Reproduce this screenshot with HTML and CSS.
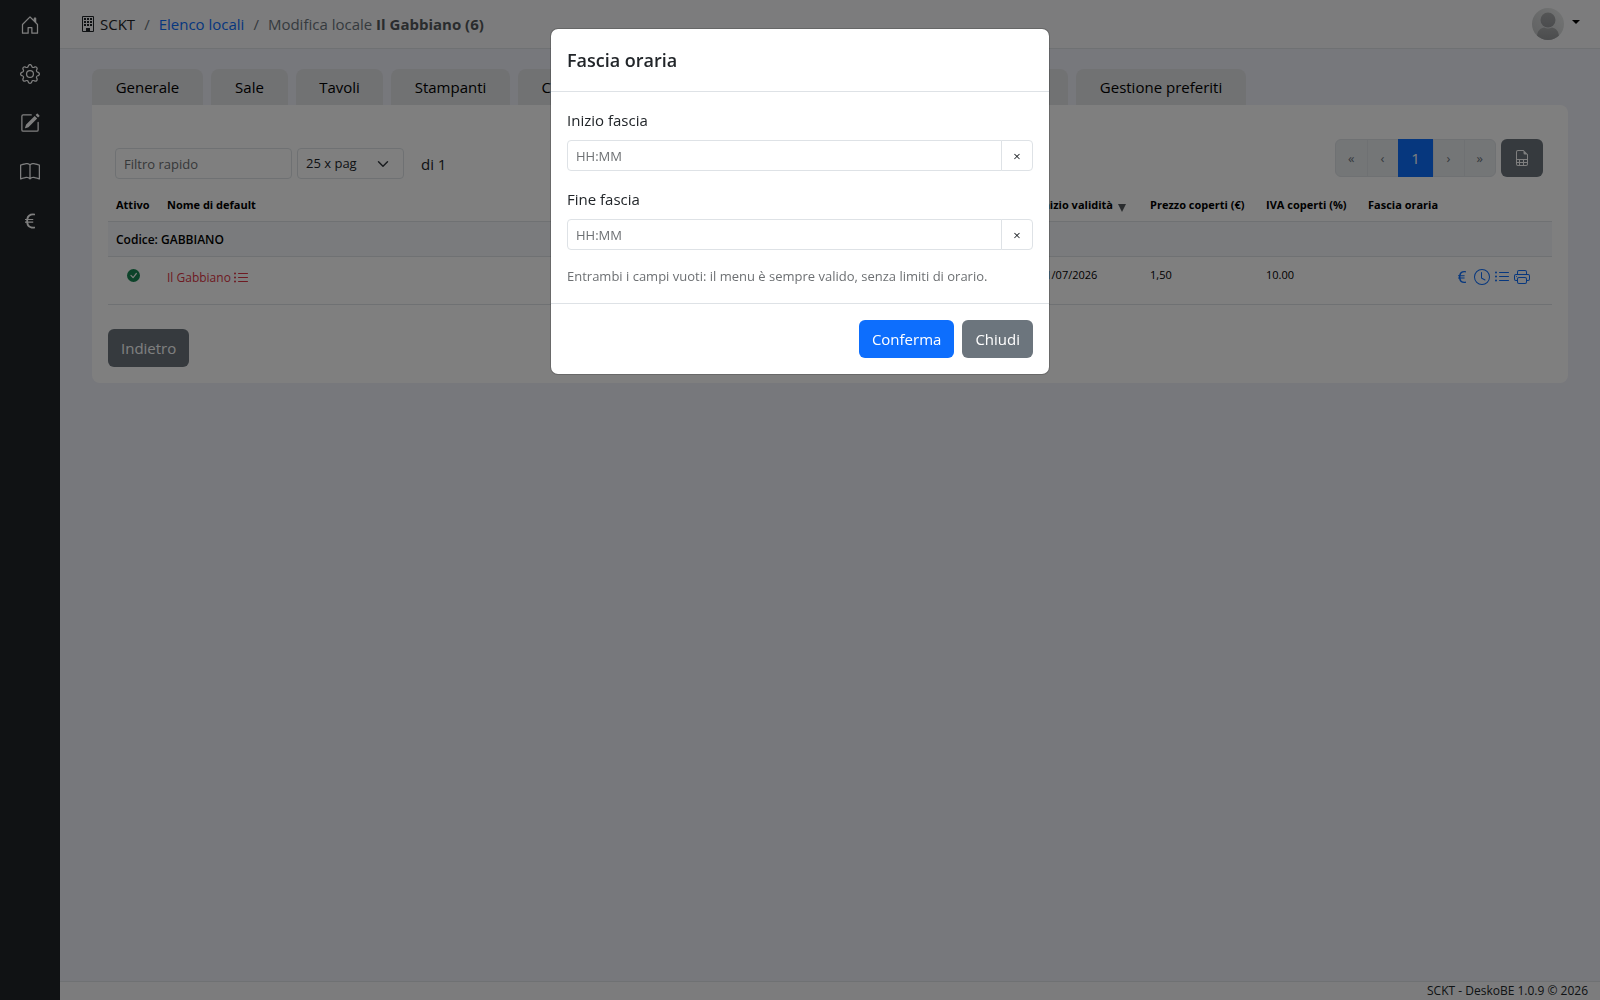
FILE: index.html
```html
<!DOCTYPE html>
<html lang="it">
<head>
    <meta charset="UTF-8">
    <meta name="viewport" content="width=device-width, initial-scale=1.0">
    <title>SCKT - Modifica locale</title>
    <link rel="stylesheet" href="styles.css">
</head>
<body>
    <!-- icone riutilizzate -->
    <svg class="sprite" aria-hidden="true">
        <symbol id="i-euro" viewBox="0 0 16 16"><path d="M4 9.42h1.063C5.4 12.323 7.317 14 10.34 14c.622 0 1.167-.068 1.659-.185v-1.3c-.484.119-1.045.17-1.659.17-2.1 0-3.455-1.198-3.775-3.264h4.017v-.928H6.497v-.936q-.002-.165.008-.329h4.078v-.927H6.618c.388-1.898 1.719-2.985 3.723-2.985.614 0 1.175.05 1.659.177V2.194A6.6 6.6 0 0 0 10.341 2c-2.928 0-4.82 1.569-5.244 4.3H4v.928h1.01v1.265H4v.928z"/></symbol>
        <symbol id="i-list" viewBox="0 0 16 16"><path fill-rule="evenodd" d="M5 11.5a.5.5 0 0 1 .5-.5h9a.5.5 0 0 1 0 1h-9a.5.5 0 0 1-.5-.5m0-4a.5.5 0 0 1 .5-.5h9a.5.5 0 0 1 0 1h-9a.5.5 0 0 1-.5-.5m0-4a.5.5 0 0 1 .5-.5h9a.5.5 0 0 1 0 1h-9a.5.5 0 0 1-.5-.5m-3 1a1 1 0 1 0 0-2 1 1 0 0 0 0 2m0 4a1 1 0 1 0 0-2 1 1 0 0 0 0 2m0 4a1 1 0 1 0 0-2 1 1 0 0 0 0 2"/></symbol>
    </svg>

    <div class="wrapper">
        <nav class="sidebar" aria-label="Menu principale">
            <a href="#" aria-label="Home"><svg viewBox="0 0 16 16"><path d="M8.354 1.146a.5.5 0 0 0-.708 0l-6 6A.5.5 0 0 0 1.5 7.5v7a.5.5 0 0 0 .5.5h4.5a.5.5 0 0 0 .5-.5v-4h2v4a.5.5 0 0 0 .5.5H14a.5.5 0 0 0 .5-.5v-7a.5.5 0 0 0-.146-.354L13 5.793V2.5a.5.5 0 0 0-.5-.5h-1a.5.5 0 0 0-.5.5v1.293zM2.5 14V7.707l5.5-5.5 5.5 5.5V14H10v-4a.5.5 0 0 0-.5-.5h-3a.5.5 0 0 0-.5.5v4z"/></svg></a>
            <a href="#" aria-label="Impostazioni"><svg viewBox="0 0 16 16"><path d="M8 4.754a3.246 3.246 0 1 0 0 6.492 3.246 3.246 0 0 0 0-6.492M5.754 8a2.246 2.246 0 1 1 4.492 0 2.246 2.246 0 0 1-4.492 0"/><path d="M9.796 1.343c-.527-1.79-3.065-1.79-3.592 0l-.094.319a.873.873 0 0 1-1.255.52l-.292-.16c-1.64-.892-3.433.902-2.54 2.541l.159.292a.873.873 0 0 1-.52 1.255l-.319.094c-1.79.527-1.79 3.065 0 3.592l.319.094a.873.873 0 0 1 .52 1.255l-.16.292c-.892 1.64.901 3.434 2.541 2.54l.292-.159a.873.873 0 0 1 1.255.52l.094.319c.527 1.79 3.065 1.79 3.592 0l.094-.319a.873.873 0 0 1 1.255-.52l.292.16c1.64.893 3.434-.902 2.54-2.541l-.159-.292a.873.873 0 0 1 .52-1.255l.319-.094c1.79-.527 1.79-3.065 0-3.592l-.319-.094a.873.873 0 0 1-.52-1.255l.16-.292c.893-1.64-.902-3.433-2.541-2.54l-.292.159a.873.873 0 0 1-1.255-.52zm-2.633.283c.246-.835 1.428-.835 1.674 0l.094.319a1.873 1.873 0 0 0 2.693 1.115l.291-.16c.764-.415 1.6.42 1.184 1.185l-.159.292a1.873 1.873 0 0 0 1.116 2.692l.318.094c.835.246.835 1.428 0 1.674l-.319.094a1.873 1.873 0 0 0-1.115 2.693l.16.291c.415.764-.42 1.6-1.185 1.184l-.291-.159a1.873 1.873 0 0 0-2.693 1.116l-.094.318c-.246.835-1.428.835-1.674 0l-.094-.319a1.873 1.873 0 0 0-2.692-1.115l-.292.16c-.764.415-1.6-.42-1.184-1.185l.159-.291A1.873 1.873 0 0 0 1.945 8.93l-.319-.094c-.835-.246-.835-1.428 0-1.674l.319-.094A1.873 1.873 0 0 0 3.06 4.377l-.16-.292c-.415-.764.42-1.6 1.185-1.184l.292.159a1.873 1.873 0 0 0 2.692-1.115z"/></svg></a>
            <a href="#" aria-label="Modifica"><svg viewBox="0 0 16 16"><path d="M15.502 1.94a.5.5 0 0 1 0 .706L14.459 3.69l-2-2L13.502.646a.5.5 0 0 1 .707 0l1.293 1.293zm-1.75 2.456-2-2L4.939 9.21a.5.5 0 0 0-.121.196l-.805 2.414a.25.25 0 0 0 .316.316l2.414-.805a.5.5 0 0 0 .196-.12z"/><path fill-rule="evenodd" d="M1 13.5A1.5 1.5 0 0 0 2.5 15h11a1.5 1.5 0 0 0 1.5-1.5v-6a.5.5 0 0 0-1 0v6a.5.5 0 0 1-.5.5h-11a.5.5 0 0 1-.5-.5v-11a.5.5 0 0 1 .5-.5H9a.5.5 0 0 0 0-1H2.5A1.5 1.5 0 0 0 1 2.5z"/></svg></a>
            <a href="#" aria-label="Menu"><svg viewBox="0 0 16 16"><path d="M1 2.828c.885-.37 2.154-.769 3.388-.893 1.33-.134 2.458.063 3.112.752v9.746c-.935-.53-2.12-.603-3.213-.493-1.18.12-2.37.461-3.287.811zm7.5-.141c.654-.689 1.782-.886 3.112-.752 1.234.124 2.503.523 3.388.893v9.923c-.918-.35-2.107-.692-3.287-.81-1.094-.111-2.278-.039-3.213.492zM8 1.783C7.015.936 5.587.81 4.287.94c-1.514.153-3.042.672-3.994 1.105A.5.5 0 0 0 0 2.5v11a.5.5 0 0 0 .707.455c.882-.4 2.303-.881 3.68-1.02 1.409-.142 2.59.087 3.223.877a.5.5 0 0 0 .78 0c.633-.79 1.814-1.019 3.222-.877 1.378.139 2.8.62 3.681 1.02A.5.5 0 0 0 16 13.5v-11a.5.5 0 0 0-.293-.455c-.952-.433-2.48-.952-3.994-1.105C10.413.809 8.985.936 8 1.783"/></svg></a>
            <a href="#" aria-label="Prezzi"><svg><use href="#i-euro"/></svg></a>
        </nav>

        <div class="page">
            <header class="topbar">
                <nav class="breadcrumb" aria-label="Percorso">
                    <span class="brand">
                        <svg class="icon" viewBox="0 0 16 16"><path fill-rule="evenodd" d="M3 0h10a1 1 0 0 1 1 1v14a1 1 0 0 1-1 1H3a1 1 0 0 1-1-1V1a1 1 0 0 1 1-1m0 1v14h10V1z"/><path d="M4 2h2v2H4zm3 0h2v2H7zm3 0h2v2h-2zM4 5h2v2H4zm3 0h2v2H7zm3 0h2v2h-2zM4 8h2v2H4zm3 0h2v2H7zm3 0h2v2h-2zM6 12h4v4H6z"/></svg>
                        SCKT
                    </span>
                    <span class="sep">/</span>
                    <a href="#">Elenco locali</a>
                    <span class="sep">/</span>
                    <span class="current">Modifica locale <strong>Il Gabbiano (6)</strong></span>
                </nav>
                <button type="button" class="user" aria-label="Utente">
                    <svg class="avatar" viewBox="0 0 32 32">
                        <defs>
                            <linearGradient id="g-bg" x1="0" y1="1" x2="1" y2="0"><stop offset="0" stop-color="#bfc1c3"/><stop offset="1" stop-color="#e8eaea"/></linearGradient>
                            <linearGradient id="g-man" x1="0" y1="0" x2="0" y2="1"><stop offset="0" stop-color="#a9abac"/><stop offset="1" stop-color="#96989b"/></linearGradient>
                            <clipPath id="c-av"><circle cx="16" cy="16" r="16"/></clipPath>
                        </defs>
                        <g clip-path="url(#c-av)">
                            <rect width="32" height="32" fill="url(#g-bg)"/>
                            <circle cx="16" cy="12" r="7.5" fill="url(#g-man)"/>
                            <path d="M5 29c0-6 3-8.5 7-9.5 2.5 1.3 5.5 1.3 8 0 4 1 7 3.5 7 9.5v3H5z" fill="url(#g-man)"/>
                        </g>
                    </svg>
                    <span class="caret"></span>
                </button>
            </header>

            <main class="content">
                <div class="tabs">
                    <a href="#" class="w-1">Generale</a>
                    <a href="#" class="w-2">Sale</a>
                    <a href="#" class="w-3">Tavoli</a>
                    <a href="#" class="w-4">Stampanti</a>
                    <a href="#" class="w-5">Cucine</a>
                    <a href="#" class="w-6">Configurazione</a>
                    <a href="#" class="w-6">Gestione menu</a>
                    <a href="#" class="w-7">Gestione preferiti</a>
                </div>

                <section class="card">
                    <div class="toolbar">
                        <div class="filters">
                            <input type="text" class="input-sm filter" placeholder="Filtro rapido" aria-label="Filtro rapido">
                            <select class="input-sm per-page" aria-label="Righe per pagina">
                                <option>25 x pag</option>
                                <option>50 x pag</option>
                            </select>
                            <span class="pages">di 1</span>
                        </div>
                        <div class="actions">
                            <div class="pagination">
                                <button type="button" disabled>«</button>
                                <button type="button" disabled>‹</button>
                                <button type="button" class="active">1</button>
                                <button type="button" disabled>›</button>
                                <button type="button" disabled>»</button>
                            </div>
                            <button type="button" class="btn btn-secondary" aria-label="Esporta">
                                <svg class="icon" viewBox="0 0 16 16"><path d="M14 14V4.5L9.5 0H4a2 2 0 0 0-2 2v12a2 2 0 0 0 2 2h8a2 2 0 0 0 2-2M9.5 3A1.5 1.5 0 0 0 11 4.5h2V9H3V2a1 1 0 0 1 1-1h5.5zM3 12v-2h2v2zm0 1h2v2H4a1 1 0 0 1-1-1zm3 2v-2h3v2zm4 0v-2h3v1a1 1 0 0 1-1 1zm3-3h-3v-2h3zm-7 0v-2h3v2z"/></svg>
                            </button>
                        </div>
                    </div>

                    <table class="grid">
                        <colgroup>
                            <col class="c-active">
                            <col>
                            <col class="c-date">
                            <col class="c-price">
                            <col class="c-vat">
                            <col class="c-time">
                            <col class="c-actions">
                        </colgroup>
                        <thead>
                            <tr>
                                <th>Attivo</th>
                                <th>Nome di default</th>
                                <th>Inizio validità <span class="sort"></span></th>
                                <th>Prezzo coperti (€)</th>
                                <th>IVA coperti (%)</th>
                                <th>Fascia oraria</th>
                                <th></th>
                            </tr>
                        </thead>
                        <tbody>
                            <tr class="group">
                                <td colspan="7">Codice: GABBIANO</td>
                            </tr>
                            <tr class="item">
                                <td class="status"><svg viewBox="0 0 16 16"><path d="M16 8A8 8 0 1 1 0 8a8 8 0 0 1 16 0m-3.97-3.03a.75.75 0 0 0-1.08.022L7.477 9.417 5.384 7.323a.75.75 0 0 0-1.06 1.06L6.97 11.03a.75.75 0 0 0 1.079-.02l3.992-4.99a.75.75 0 0 0-.01-1.05z"/></svg></td>
                                <td><a href="#" class="name">Il Gabbiano <svg class="icon"><use href="#i-list"/></svg></a></td>
                                <td>01/07/2026</td>
                                <td>1,50</td>
                                <td>10.00</td>
                                <td></td>
                                <td>
                                    <div class="row-actions">
                                        <a href="#" aria-label="Prezzi"><svg class="icon"><use href="#i-euro"/></svg></a>
                                        <a href="#" aria-label="Fascia oraria"><svg class="icon" viewBox="0 0 16 16"><path d="M8 3.5a.5.5 0 0 0-1 0V9a.5.5 0 0 0 .252.434l3.5 2a.5.5 0 0 0 .496-.868L8 8.71z"/><path d="M8 16A8 8 0 1 0 8 0a8 8 0 0 0 0 16m7-8A7 7 0 1 1 1 8a7 7 0 0 1 14 0"/></svg></a>
                                        <a href="#" aria-label="Elenco"><svg class="icon"><use href="#i-list"/></svg></a>
                                        <a href="#" aria-label="Stampa"><svg class="icon" viewBox="0 0 16 16"><path d="M2.5 8a.5.5 0 1 0 0-1 .5.5 0 0 0 0 1"/><path d="M5 1a2 2 0 0 0-2 2v2H2a2 2 0 0 0-2 2v3a2 2 0 0 0 2 2h1v1a2 2 0 0 0 2 2h6a2 2 0 0 0 2-2v-1h1a2 2 0 0 0 2-2V7a2 2 0 0 0-2-2h-1V3a2 2 0 0 0-2-2zM4 3a1 1 0 0 1 1-1h6a1 1 0 0 1 1 1v2H4zm1 5a2 2 0 0 0-2 2v1H2a1 1 0 0 1-1-1V7a1 1 0 0 1 1-1h12a1 1 0 0 1 1 1v3a1 1 0 0 1-1 1h-1v-1a2 2 0 0 0-2-2zm7 2v3a1 1 0 0 1-1 1H5a1 1 0 0 1-1-1v-3a1 1 0 0 1 1-1h6a1 1 0 0 1 1 1"/></svg></a>
                                    </div>
                                </td>
                            </tr>
                        </tbody>
                    </table>

                    <button type="button" class="btn btn-secondary back">Indietro</button>
                </section>
            </main>

            <footer class="footer">SCKT - DeskoBE 1.0.9 © 2026</footer>
        </div>
    </div>

    <div class="backdrop">
        <div class="modal" role="dialog" aria-modal="true" aria-labelledby="modalTitle">
            <div class="modal-header">
                <h5 id="modalTitle">Fascia oraria</h5>
            </div>
            <div class="modal-body">
                <label for="inizio">Inizio fascia</label>
                <div class="input-group">
                    <input type="text" id="inizio" class="input-sm" placeholder="HH:MM">
                    <button type="button" aria-label="Svuota inizio">×</button>
                </div>
                <label for="fine">Fine fascia</label>
                <div class="input-group">
                    <input type="text" id="fine" class="input-sm" placeholder="HH:MM">
                    <button type="button" aria-label="Svuota fine">×</button>
                </div>
                <p class="hint">Entrambi i campi vuoti: il menu è sempre valido, senza limiti di orario.</p>
            </div>
            <div class="modal-footer">
                <button type="button" class="btn btn-primary">Conferma</button>
                <button type="button" class="btn btn-secondary">Chiudi</button>
            </div>
        </div>
    </div>
</body>
</html>
```
FILE: styles.css
```css
* {
    box-sizing: border-box;
}
body {
    margin: 0;
    font-family: "Open Sans", "Noto Sans", sans-serif;
    font-size: 15px;
    line-height: 24px;
    color: #212529;
    background-color: #eff0f8;
}
a {
    color: #0d6efd;
    text-decoration: none;
}
button, input, select {
    font-family: inherit;
    color: inherit;
}
svg {
    fill: currentColor;
}
.sprite {
    display: none;
}
.icon {
    width: 16px;
    height: 16px;
    flex: none;
}
.wrapper {
    display: flex;
    min-height: 100vh;
}

/* sidebar */
.sidebar {
    flex: none;
    width: 60px;
    display: flex;
    flex-direction: column;
    background-color: #212529;
}
.sidebar a {
    display: flex;
    justify-content: center;
    align-items: center;
    height: 49px;
    color: #fff;
}
.sidebar svg {
    width: 20px;
    height: 20px;
}

/* pagina */
.page {
    flex: 1;
    min-width: 0;
    display: flex;
    flex-direction: column;
}
.topbar {
    display: flex;
    justify-content: space-between;
    align-items: center;
    height: 49px;
    padding: 0 20px;
    background-color: #f8f9fa;
    border-bottom: 1px solid #dee2e6;
}
.breadcrumb {
    display: flex;
    gap: 9px;
}
.brand {
    display: flex;
    align-items: center;
    gap: 4px;
}
.sep, .current {
    color: #6c757d;
}
.current strong {
    color: #55595c;
}
.user {
    display: flex;
    align-items: center;
    gap: 8px;
    padding: 0;
    border: none;
    background: none;
}
.avatar {
    width: 32px;
    height: 32px;
}
.caret {
    margin-bottom: 4px;
    border-top: 4px solid #000;
    border-left: 4px solid transparent;
    border-right: 4px solid transparent;
}
.content {
    flex: 1;
    padding: 20px 32px;
}
.tabs {
    display: flex;
    gap: 8px;
}
.tabs a {
    height: 36px;
    line-height: 36px;
    text-align: center;
    color: #000;
    background-color: #e2e4e7;
    border-radius: 8px 8px 0 0;
}
.w-1 { width: 111px; }
.w-2 { width: 77px; }
.w-3 { width: 87px; }
.w-4 { width: 119px; }
.w-5 { width: 94px; }
.w-6 { width: 220px; }
.w-7 { width: 170px; }
.card {
    padding: 34px 16px 16px;
    background-color: #fff;
    border-radius: 0 8px 8px 8px;
}
.toolbar {
    display: flex;
    justify-content: space-between;
    height: 40px;
    margin-bottom: 8px;
    padding: 0 9px 0 7px;
}
.filters {
    display: flex;
    align-items: center;
    align-self: flex-end;
    gap: 5px;
}
.actions {
    display: flex;
    align-items: flex-start;
    gap: 5px;
}
.input-sm {
    height: 31px;
    padding: 4px 8px;
    font-size: 13px;
    line-height: 21px;
    background-color: #fff;
    border: 1px solid #dee2e6;
    border-radius: 4px;
}
.input-sm::placeholder {
    color: #6d7073;
    opacity: 1;
}
.filter {
    width: 177px;
}
.per-page {
    width: 107px;
    appearance: none;
    background: #fff url("data:image/svg+xml,%3csvg xmlns='http://www.w3.org/2000/svg' viewBox='0 0 16 16'%3e%3cpath fill='none' stroke='%23343a40' stroke-linecap='round' stroke-linejoin='round' stroke-width='2' d='m2 5 6 6 6-6'/%3e%3c/svg%3e") no-repeat right 14px center;
    background-size: 12px 12px;
}
.pages {
    margin-left: 12px;
}
.pagination {
    display: flex;
}
.pagination button {
    min-width: 32px;
    height: 38px;
    padding: 6px 12px;
    font-size: 13px;
    line-height: 24px;
    color: #6c757d;
    background-color: #e9ecef;
    border: 1px solid #dee2e6;
    margin-left: -1px;
}
.pagination button:first-child {
    border-radius: 6px 0 0 6px;
}
.pagination button:last-child {
    border-radius: 0 6px 6px 0;
}
.pagination .active {
    min-width: 36px;
    font-size: 15px;
    color: #fff;
    background-color: #0d6efd;
    border-color: #0d6efd;
}
.btn {
    display: flex;
    align-items: center;
    height: 38px;
    padding: 6px 12px;
    font-size: 15px;
    line-height: 24px;
    color: #fff;
    border: 1px solid transparent;
    border-radius: 6px;
}
.btn-primary {
    background-color: #0d6efd;
}
.btn-secondary {
    background-color: #6c757d;
}
.back {
    margin-top: 24px;
}

/* tabella */
.grid {
    width: 100%;
    table-layout: fixed;
    border-collapse: separate;
    border-spacing: 0;
    font-size: 11px;
    line-height: 18px;
    color: #000;
}
.grid th, .grid td {
    padding: 9px 8px 7px;
    text-align: left;
    vertical-align: top;
    white-space: nowrap;
    border-bottom: 1px solid #dee2e6;
}
.grid th {
    font-weight: 700;
}
.c-active { width: 51px; }
.c-date { width: 115px; }
.c-price { width: 116px; }
.c-vat { width: 102px; }
.c-time { width: 86px; }
.c-actions { width: 106px; }
.grid th:nth-child(3), .item td:nth-child(3) {
    padding-left: 12px;
    padding-right: 0;
}
.sort {
    display: inline-block;
    margin-left: 2px;
    vertical-align: -3px;
    border-top: 8px solid #55595c;
    border-left: 4px solid transparent;
    border-right: 4px solid transparent;
}
.grid .group td {
    font-size: 12px;
    font-weight: 600;
    background-color: #f5f7fa;
}
.item {
    height: 48px;
}
.grid .status {
    text-align: center;
    color: #198754;
}
.status svg {
    width: 13px;
    height: 13px;
    vertical-align: -3px;
}
.name {
    display: flex;
    align-items: center;
    gap: 2px;
    height: 24px;
    font-size: 12px;
    color: #dc3545;
}
.row-actions {
    display: flex;
    justify-content: flex-end;
    gap: 4px;
    padding: 3px 14px 3px 0;
}
.row-actions a {
    display: flex;
}
.footer {
    padding-right: 12px;
    font-size: 12px;
    line-height: 18px;
    text-align: right;
    background-color: #f8f9fa;
    border-top: 1px solid #dee2e6;
}

/* finestra modale */
.backdrop {
    position: fixed;
    inset: 0;
    display: flex;
    justify-content: center;
    align-items: flex-start;
    padding-top: 28px;
    background-color: rgba(0, 0, 0, 0.5);
}
.modal {
    width: 100%;
    max-width: 500px;
    background-color: #fff;
    background-clip: padding-box;
    border: 1px solid rgba(0, 0, 0, 0.175);
    border-radius: 8px;
}
.modal-header {
    padding: 16px;
    border-bottom: 1px solid #dee2e6;
}
.modal-header h5 {
    margin: 0;
    font-size: 18px;
    font-weight: 600;
    line-height: 30px;
}
.modal-body {
    padding: 16px;
}
.modal-body label {
    display: block;
    margin-bottom: 8px;
}
.input-group {
    display: flex;
    margin-bottom: 16px;
}
.input-group input {
    flex: 1;
    border-radius: 4px 0 0 4px;
}
.input-group button {
    width: 32px;
    margin-left: -1px;
    padding: 0;
    font-size: 13px;
    background-color: #fff;
    border: 1px solid #dee2e6;
    border-radius: 0 4px 4px 0;
}
.hint {
    margin: 0;
    font-size: 13px;
    line-height: 21px;
    color: #6d7073;
}
.modal-footer {
    display: flex;
    justify-content: flex-end;
    gap: 8px;
    padding: 16px;
    border-top: 1px solid #dee2e6;
}
```
